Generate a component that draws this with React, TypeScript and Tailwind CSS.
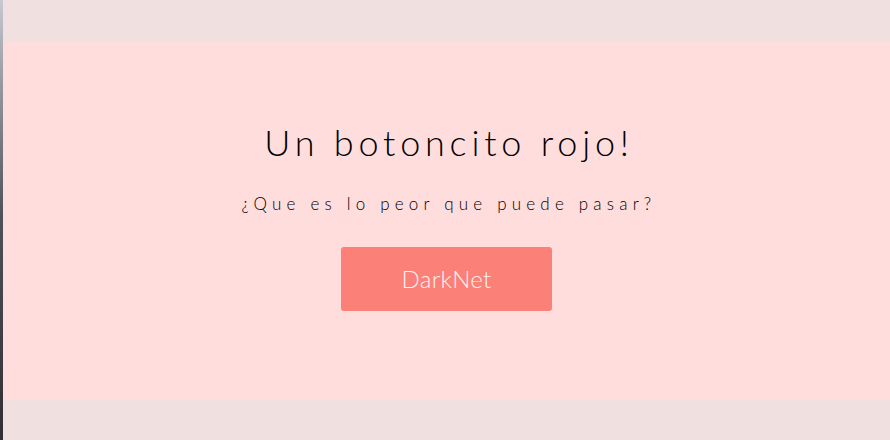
import React from "react";

export default function App() {
  return (
    <div className="flex h-[440px] w-[890px] overflow-hidden bg-[#f0e0e0]" style={{ fontFamily: "Lato, 'Open Sans', sans-serif" }}>
      <div className="w-[3px] shrink-0 bg-gradient-to-b from-[#c8c8d0] via-[#505058] to-[#303034]" />
      <div className="flex flex-1 flex-col">
        <div className="h-[42px] bg-[#f0e0e0]" />
        <div className="flex h-[358px] flex-col items-center bg-[#ffdddd]">
          <h1 className="mt-[78px] pl-[5px] text-[36px] font-light leading-[44px] tracking-[4.8px] text-black">Un botoncito rojo!</h1>
          <p className="mt-[28px] pl-[5px] text-[17px] font-light leading-[24px] tracking-[5.2px] text-black">¿Que es lo peor que puede pasar?</p>
          <button className="mt-[31px] flex h-[64px] w-[211px] items-center justify-center rounded-[3px] bg-[#fa8078] text-[24px] font-light tracking-[0.3px] text-[#fff4f2]">DarkNet</button>
        </div>
        <div className="flex-1 bg-[#f0e0e0]" />
      </div>
    </div>
  );
}
